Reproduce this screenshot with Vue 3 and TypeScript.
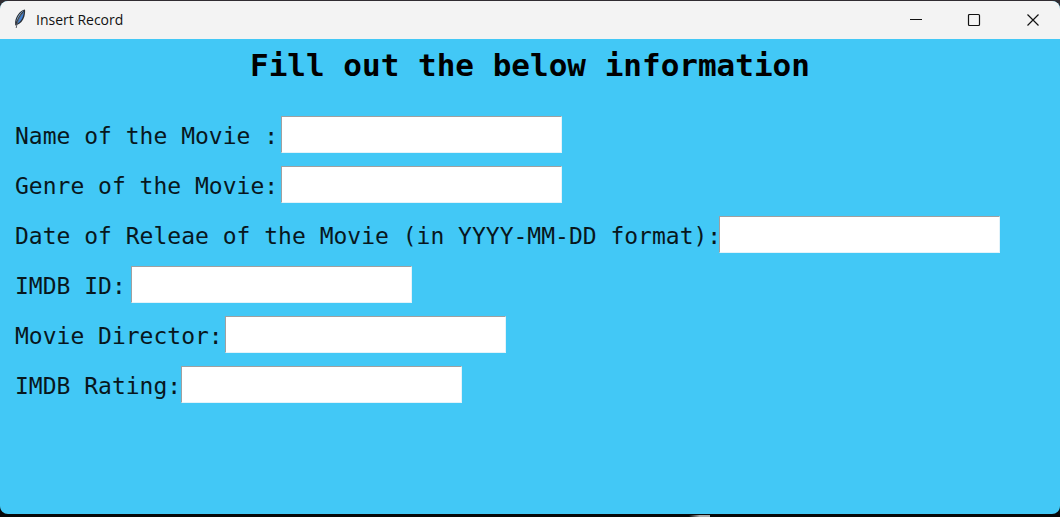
<script setup lang="ts">
import { reactive } from 'vue'

interface Field {
  id: string
  label: string
  labelWidth: number
}

const fields: Field[] = [
  { id: 'name', label: 'Name of the Movie :', labelWidth: 266 },
  { id: 'genre', label: 'Genre of the Movie:', labelWidth: 266 },
  { id: 'release', label: 'Date of Releae of the Movie (in YYYY-MM-DD format):', labelWidth: 704 },
  { id: 'imdb-id', label: 'IMDB ID:', labelWidth: 116 },
  { id: 'director', label: 'Movie Director:', labelWidth: 210 },
  { id: 'rating', label: 'IMDB Rating:', labelWidth: 166 },
]

const values = reactive<Record<string, string>>({})
</script>

<template>
  <div class="desktop">
    <main class="window">
      <header class="titlebar">
        <svg class="feather" viewBox="0 0 16 22" aria-hidden="true">
          <path d="M13 1.500C8 2.500 3.800 8 3.100 14l.1 3.500 1.600-.4c3.500-1.200 6.300-4.600 7.500-8.400.8-2.700 1-5.200.7-7.200z" fill="#2b3038" />
          <path d="M11.800 2.600C8.100 4.500 4.900 9.400 4.300 14.200c1.200-4 3.400-7.800 7.500-11.600z" fill="#9bcaf3" />
          <path d="M11.900 3.600C8.600 7 6.500 11 5 15.800c2.800-1.500 4.900-4.100 5.900-7.200.6-1.800.9-3.500 1-5z" fill="#3f80d2" />
          <path d="M10.800 5C7.500 8.500 5 13.500 4.200 20" fill="none" stroke="#5d6068" stroke-width="1" />
        </svg>
        <span class="caption">Insert Record</span>
        <button class="control" type="button" aria-label="Minimize">
          <svg viewBox="0 0 14 14" aria-hidden="true"><path d="M1 6.500h12" /></svg>
        </button>
        <button class="control" type="button" aria-label="Maximize">
          <svg viewBox="0 0 14 14" aria-hidden="true"><rect x="1.500" y="1.500" width="11" height="11" rx="1" /></svg>
        </button>
        <button class="control" type="button" aria-label="Close">
          <svg viewBox="0 0 14 14" aria-hidden="true"><path d="M1.500 1.500l11 11M12.500 1.500l-11 11" /></svg>
        </button>
      </header>
      <form class="form" @submit.prevent>
        <h1>Fill out the below information</h1>
        <div v-for="field in fields" :key="field.id" class="row">
          <label :for="field.id" :style="{ width: field.labelWidth + 'px' }">{{ field.label }}</label>
          <input :id="field.id" v-model="values[field.id]" type="text" autocomplete="off" />
        </div>
      </form>
    </main>
  </div>
</template>

<style>
body {
  margin: 0;
}
</style>

<style scoped>
.desktop {
  box-sizing: border-box;
  display: flex;
  min-height: 100vh;
  padding: 1px 0 3px;
  background:
    linear-gradient(90deg, transparent 65%, #aaa 66%, #aaa 67%, transparent 67%) bottom / 100% 2px no-repeat,
    linear-gradient(#302c31 0 20px, #070809 40px);
}

.window {
  flex: 1;
  display: flex;
  flex-direction: column;
  min-width: 0;
  overflow: hidden;
  border-radius: 8px;
  background: #42c8f6;
}

.titlebar {
  display: flex;
  align-items: stretch;
  height: 38px;
  background: #f3f3f3;
}

.feather {
  width: 16px;
  height: 22px;
  margin: 7px 8px 0 12px;
}

.caption {
  flex: 1;
  font: 14px/38px "Open Sans", "Noto Sans", sans-serif;
  color: #111;
}

.control {
  display: flex;
  align-items: center;
  justify-content: center;
  width: 58px;
  padding: 0;
  border: 0;
  background: transparent;
}

.control:last-child {
  width: 54px;
  margin-left: 3px;
}

.control svg {
  width: 14px;
  height: 14px;
  fill: none;
  stroke: #111;
  stroke-width: 1.200;
}

.form {
  display: flex;
  flex-direction: column;
  gap: 12px;
  padding: 8px 15px 24px;
  color: #08171d;
  font-family: "DejaVu Sans Mono", "Liberation Mono", monospace;
}

h1 {
  margin: 0 0 20px;
  color: #000;
  font-size: 31px;
  line-height: 36px;
  font-weight: 700;
  text-align: center;
}

.row {
  display: flex;
  align-items: center;
  height: 38px;
}

label {
  flex: none;
  padding-top: 4px;
  font-size: 23px;
  line-height: 38px;
  white-space: nowrap;
}

input {
  box-sizing: border-box;
  width: 281px;
  height: 37px;
  padding: 0 6px;
  border: 1px solid;
  border-color: #a0a0a0 #e3f3fa #e3f3fa #a0a0a0;
  border-radius: 0;
  outline: 0;
  background: #fff;
  font: inherit;
  font-size: 23px;
}
</style>
